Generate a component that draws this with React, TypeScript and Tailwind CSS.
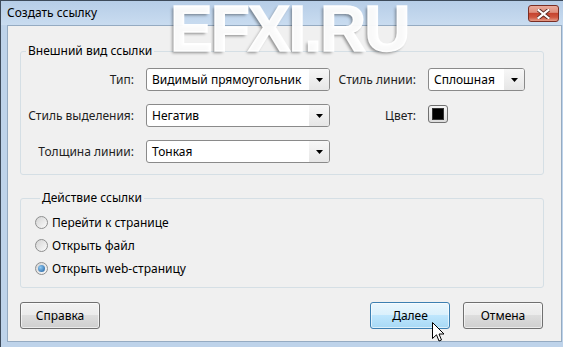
import React from "react";

type DropdownProps = {
  value: string;
  className: string;
};

function Dropdown({ value, className }: DropdownProps) {
  return (
    <div
      className={`flex h-[23px] items-stretch rounded-[3px] border border-[#8a8a8a] bg-white ${className}`}
    >
      <span className="flex flex-1 items-center pl-[5px] whitespace-nowrap text-black">{value}</span>
      <span className="flex w-[20px] items-center justify-center rounded-r-[2px] bg-linear-to-b from-[#f7f7f7] to-[#e6e6e6]">
        <svg width="7" height="4" viewBox="0 0 7 4">
          <path d="M0 0h7L3.5 4z" fill="#000" />
        </svg>
      </span>
    </div>
  );
}

function Radio({ label, checked }: { label: string; checked?: boolean }) {
  return (
    <div className="flex h-[23px] items-center gap-[4px]">
      <span className="flex h-[13px] w-[13px] items-center justify-center rounded-full border border-[#8e8f8f] bg-[linear-gradient(135deg,#d4d4d4,#fbfbfb)]">
        {checked && (
          <span className="h-[7px] w-[7px] rounded-full bg-[radial-gradient(circle_at_35%_35%,#8fcaf4,#1b5a9b)]" />
        )}
      </span>
      <span>{label}</span>
    </div>
  );
}

function WinButton({ children, hover }: { children: React.ReactNode; hover?: boolean }) {
  return (
    <button
      className={
        hover
          ? "flex h-[27px] w-[80px] items-center justify-center rounded-[3px] border border-[#3c7fb1] bg-[linear-gradient(#eaf6fd_0%,#d9f0fc_50%,#bee6fd_50%,#a7d9f5_100%)] text-black shadow-[inset_0_0_0_1px_rgba(255,255,255,0.6)]"
          : "flex h-[27px] w-[80px] items-center justify-center rounded-[3px] border border-[#707070] bg-[linear-gradient(#f2f2f2_0%,#ebebeb_50%,#dddddd_50%,#cfcfcf_100%)] text-black shadow-[inset_0_0_0_1px_rgba(255,255,255,0.6)]"
      }
    >
      {children}
    </button>
  );
}

export default function App() {
  return (
    <div className="relative h-[347px] w-[563px] overflow-hidden font-['Noto_Sans',sans-serif] text-[12px] text-black">
      <div className="flex h-full flex-col border-t border-l border-[#3d4a5a]">
        {/* title bar */}
        <div className="flex h-[24px] justify-between bg-linear-to-b from-[#b6cde7] to-[#c9dcf0] pr-[4px] pl-[6px]">
          <span className="flex items-center">Создать ссылку</span>
          <span className="mt-[4px] flex h-[17px] w-[31px] items-center justify-center rounded-[3px] border border-[#7a2e24] bg-[linear-gradient(#eaab9c_0%,#df8f7d_42%,#c6442f_50%,#cf563f_75%,#e59d89_100%)]">
            <svg width="13" height="10" viewBox="0 0 13 10">
              <path
                d="M1.5 1 L11.5 9 M11.5 1 L1.5 9"
                stroke="#5a2a24"
                strokeWidth="4"
                strokeLinecap="square"
              />
              <path
                d="M1.5 1 L11.5 9 M11.5 1 L1.5 9"
                stroke="#fff"
                strokeWidth="2.2"
                strokeLinecap="square"
              />
            </svg>
          </span>
        </div>

        {/* frame + client area */}
        <div className="flex flex-1 bg-[#bed3ea] pr-px pb-[5px] pl-[6px]">
          <div className="flex flex-1 flex-col border border-[#95abc2] bg-[#f0f0f0] pt-[17px] pl-[12px]">
            <fieldset className="w-[524px] rounded-[3px] border border-[#d5dfe5] pt-[9px] pb-[11px]">
              <legend className="ml-[5px] px-[2px] leading-[16px]">Внешний вид ссылки</legend>
              <div className="grid grid-cols-[113px_184px_74px_97px] grid-rows-[23px_23px_23px] gap-x-[12px] gap-y-[13px] text-[#1e1e1e]">
                <span className="flex items-center justify-end whitespace-nowrap">Тип:</span>
                <Dropdown value="Видимый прямоугольник" className="w-[184px]" />
                <span className="flex items-center justify-end whitespace-nowrap">Стиль линии:</span>
                <Dropdown value="Сплошная" className="w-[97px]" />

                <span className="flex items-center justify-end whitespace-nowrap">Стиль выделения:</span>
                <Dropdown value="Негатив" className="w-[184px]" />
                <span className="flex items-center justify-end whitespace-nowrap">Цвет:</span>
                <span className="mt-px flex h-[18px] w-[20px] items-center justify-center self-start rounded-[3px] border border-[#707070] bg-linear-to-b from-[#f4f4f4] to-[#dcdcdc]">
                  <span className="h-[12px] w-[12px] border border-[#333] bg-black" />
                </span>

                <span className="flex items-center justify-end whitespace-nowrap">Толщина линии:</span>
                <Dropdown value="Тонкая" className="w-[184px]" />
                <span />
                <span />
              </div>
            </fieldset>

            <fieldset className="mt-[15px] w-[524px] rounded-[3px] border border-[#d5dfe5] pt-[5px] pb-[7px] pl-[14px]">
              <legend className="ml-[5px] px-[2px] leading-[16px]">Действие ссылки</legend>
              <Radio label="Перейти к странице" />
              <Radio label="Открыть файл" />
              <Radio label="Открыть web-страницу" checked />
            </fieldset>

            <div className="mt-[14px] flex w-[523px] items-center">
              <WinButton>Справка</WinButton>
              <div className="flex-1" />
              <WinButton hover>Далее</WinButton>
              <div className="w-[13px]" />
              <WinButton>Отмена</WinButton>
            </div>
          </div>
        </div>
      </div>

      {/* site watermark over the dialog */}
      <div className="pointer-events-none absolute top-[5px] left-[170px] font-['Liberation_Sans',sans-serif] text-[64px] leading-[48px] font-bold tracking-[-2px] text-white/95 [-webkit-text-stroke:1.5px_rgba(255,255,255,0.95)] [text-shadow:-2px_2px_3px_rgba(0,0,0,0.4)]">
        EFXI.RU
      </div>

      {/* mouse pointer */}
      <svg
        className="pointer-events-none absolute top-[322px] left-[432px]"
        width="13"
        height="21"
        viewBox="0 0 13 21"
      >
        <path
          d="M0.5 0.5 L0.5 16.5 L4.5 12.8 L7 19 L9.5 18 L7 12 L12 12 Z"
          fill="#fff"
          stroke="#000"
          strokeWidth="1"
          strokeLinejoin="miter"
        />
      </svg>
    </div>
  );
}
